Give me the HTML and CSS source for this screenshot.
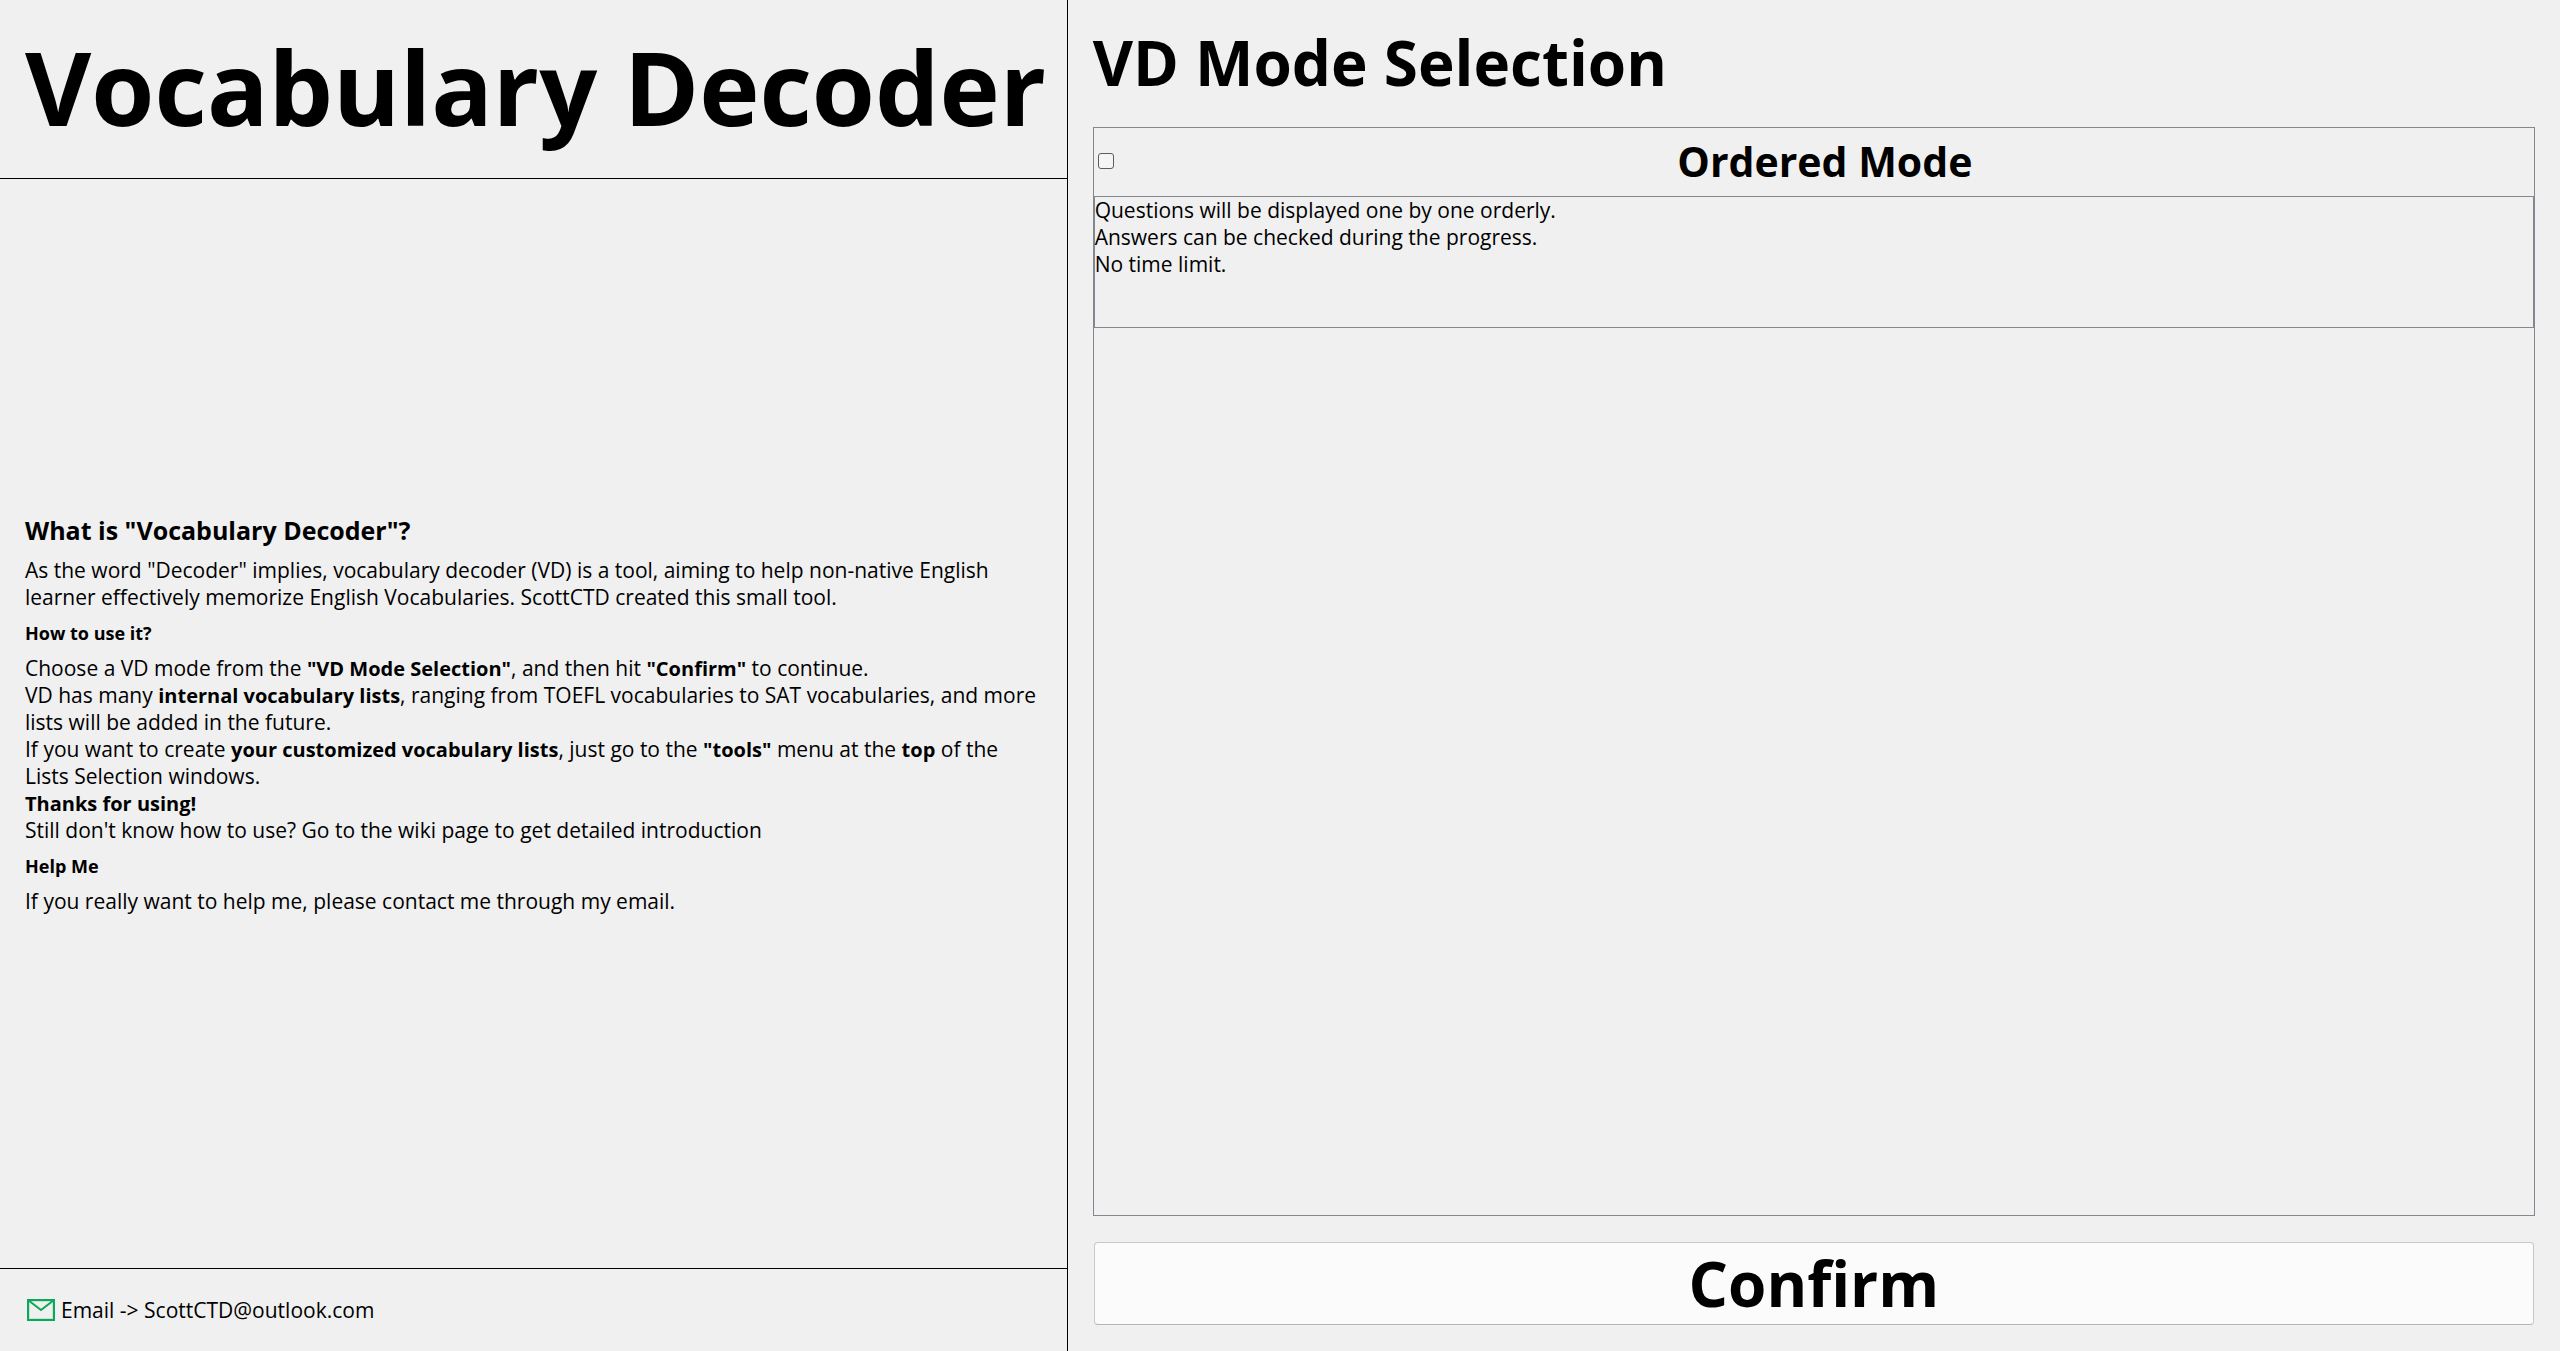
FILE: index.html
```
<!DOCTYPE html>
<html lang="en">
<head>
<meta charset="utf-8">
<title>Vocabulary Decoder</title>
<link rel="stylesheet" href="styles.css">
</head>
<body>
<div class="app">
  <section class="intro">
    <header class="intro-header">
      <h1 class="title">Vocabulary Decoder</h1>
    </header>
    <main class="intro-body">
      <h2 class="heading">What is "Vocabulary Decoder"?</h2>
      <p>As the word "Decoder" implies, vocabulary decoder (VD) is a tool, aiming to help non-native English learner effectively memorize English Vocabularies. ScottCTD created this small tool.</p>
      <h3 class="subheading">How to use it?</h3>
      <p>Choose a VD mode from the <b>"VD Mode Selection"</b>, and then hit <b>"Confirm"</b> to continue.</p>
      <p>VD has many <b>internal vocabulary lists</b>, ranging from TOEFL vocabularies to SAT vocabularies, and more lists will be added in the future.</p>
      <p>If you want to create <b>your customized vocabulary lists</b>, just go to the <b>"tools"</b> menu at the <b>top</b> of the Lists Selection windows.</p>
      <p><b>Thanks for using!</b></p>
      <p>Still don't know how to use? Go to the wiki page to get detailed introduction</p>
      <h3 class="subheading">Help Me</h3>
      <p>If you really want to help me, please contact me through my email.</p>
    </main>
    <footer class="intro-footer">
      <svg class="mail" viewBox="0 0 28 22" aria-hidden="true">
        <path class="mail-shade" d="M3 2.5H25M2.5 3V19.500H25.500V3"/>
        <path d="M1 1H27V21H1ZM1 1L14 11L27 1"/>
      </svg>
      <span>Email -&gt; ScottCTD@outlook.com</span>
    </footer>
  </section>
  <form class="modes">
    <h2 class="modes-title">VD Mode Selection</h2>
    <div class="mode-list">
      <div class="mode-row">
        <input class="mode-check" type="checkbox" id="ordered">
        <label class="mode-name" for="ordered">Ordered Mode</label>
      </div>
      <div class="mode-info">
        <p>Questions will be displayed one by one orderly.</p>
        <p>Answers can be checked during the progress.</p>
        <p>No time limit.</p>
      </div>
    </div>
    <button class="confirm" type="button">Confirm</button>
  </form>
</div>
</body>
</html>
```
FILE: styles.css
```
* {
  box-sizing: border-box;
}

body {
  margin: 0;
  background: #f0f0f0;
  color: #000;
  font: 21px/27px "Open Sans", "Noto Sans", sans-serif;
}

h1, h2, h3, p {
  margin: 0;
}

b {
  font-size: 20px;
  font-weight: 700;
}

.app {
  display: grid;
  grid-template-columns: 5fr 7fr;
  min-height: 100vh;
}

.intro {
  display: flex;
  flex-direction: column;
  min-width: 0;
}

.intro-header {
  padding: 27px 25px 31px;
  border-bottom: 1px solid #000;
}

.title {
  font-size: 102px;
  font-weight: 700;
  line-height: 120px;
  white-space: nowrap;
}

.intro-body {
  flex: 1;
  display: flex;
  flex-direction: column;
  justify-content: center;
  padding: 0 25px 20px;
}

.heading {
  margin-bottom: 10px;
  font-size: 25px;
  font-weight: 700;
  line-height: 34px;
}

.subheading {
  margin: 10px 0;
  font-size: 18px;
  font-weight: 700;
  line-height: 24px;
}

.intro-footer {
  display: flex;
  align-items: center;
  gap: 6px;
  height: 83px;
  padding: 0 27px;
  border-top: 1px solid #000;
}

.mail {
  width: 28px;
  height: 22px;
  fill: none;
  stroke: #0aa858;
  stroke-width: 2;
}

.mail-shade {
  stroke: #bfe6cf;
  stroke-width: 1;
}

.modes {
  display: flex;
  flex-direction: column;
  min-width: 0;
  padding: 18px 25px 26px;
  border-left: 1px solid #000;
}

.modes-title {
  margin-bottom: 21px;
  font-size: 62px;
  font-weight: 700;
  line-height: 88px;
}

.mode-list {
  flex: 1;
  border: 1px solid #828790;
}

.mode-row {
  display: flex;
  align-items: center;
  gap: 2px;
  height: 68px;
  padding: 0 0 2px 4px;
}

.mode-check {
  appearance: none;
  width: 16px;
  height: 16px;
  margin: 0;
  border: 1px solid #5c5c5c;
  border-radius: 3px;
  background: #f5f5f5;
}

.mode-check:checked {
  background: #0067c0;
}

.mode-name {
  flex: 1;
  font-size: 41px;
  font-weight: 700;
  line-height: 56px;
  text-align: center;
}

.mode-info {
  min-height: 132px;
  border: 1px solid #828790;
}

.confirm {
  height: 83px;
  margin: 26px 1px 0;
  padding: 0 0 2px;
  border: 1px solid #c8c8c8;
  border-bottom-color: #b4b4b4;
  border-radius: 4px;
  background: #fbfbfb;
  color: #000;
  font: 700 62px/72px "Open Sans", "Noto Sans", sans-serif;
}
```
